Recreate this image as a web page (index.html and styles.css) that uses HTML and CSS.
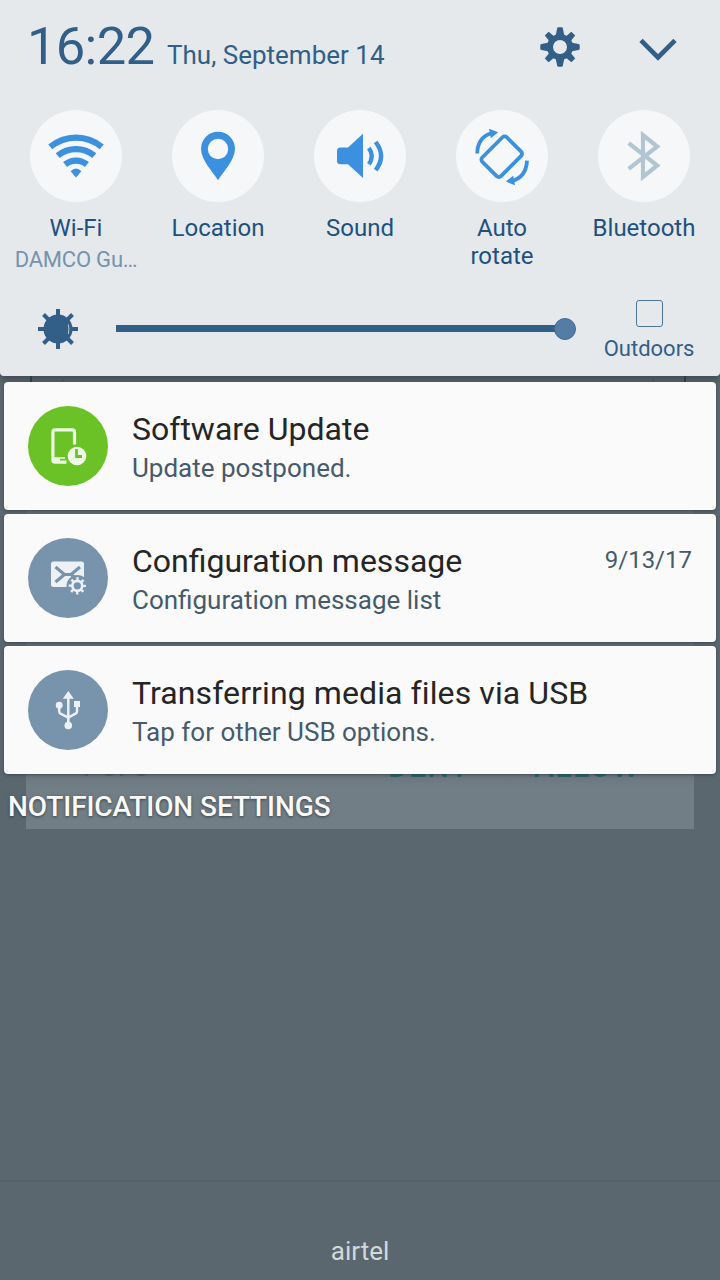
FILE: index.html
```html
<!DOCTYPE html>
<html lang="en">
<head>
<meta charset="utf-8">
<title>Notifications</title>
<link rel="stylesheet" href="styles.css">
</head>
<body>
<div class="screen">
  <div class="backdrop" aria-hidden="true">
    <i class="edge edge-a"></i><i class="edge edge-b"></i><i class="edge edge-c"></i><i class="edge edge-d"></i>
    <div class="dialog">
      <span class="count">1 of 3</span><span class="deny">DENY</span><span class="allow">ALLOW</span>
    </div>
  </div>
  <section class="panel">
    <header class="header">
      <span class="time">16:22</span>
      <span class="date">Thu, September 14</span>
      <svg class="gear" viewBox="-20 -20 40 40">
        <circle r="10" fill="none" stroke="#315f87" stroke-width="6"/>
        <g fill="#315f87">
          <path id="tooth" d="M-4.200 -12L-2.900 -18.600Q-2.700 -19.700-1.800 -19.700H1.800Q2.700 -19.700 2.900 -18.600L4.200 -12Z"/>
          <use href="#tooth" transform="rotate(90)"/><use href="#tooth" transform="rotate(180)"/><use href="#tooth" transform="rotate(270)"/>
          <path id="diag" d="M-3.400 -11.500L-2.700 -18.800H2.700L3.400 -11.500Z" transform="rotate(45)"/>
          <use href="#diag" transform="rotate(90)"/><use href="#diag" transform="rotate(180)"/><use href="#diag" transform="rotate(270)"/>
        </g>
      </svg>
      <svg class="chevron" viewBox="638 36 40 26"><path d="M641 40.400L658 57.400L675 40.400" fill="none" stroke="#315f87" stroke-width="4.700"/></svg>
    </header>
    <div class="tiles">
      <div class="tile">
        <svg class="disc" viewBox="30 110 92 92"><g fill="none" stroke="#3b90df" stroke-width="6.2"><path d="M50.3 146.9A40 40 0 0 1 101.7 146.9"/><path d="M57.7 155.7A28.5 28.5 0 0 1 94.3 155.7"/><path d="M65.1 164.5A17 17 0 0 1 86.9 164.5"/></g><path d="M76 177.4L70.6 171.2Q76 166 81.4 171.2Z" fill="#3b90df"/></svg>
        <span class="label">Wi-Fi</span><span class="network">DAMCO Gu…</span>
      </div>
      <div class="tile">
        <svg class="disc" viewBox="172 110 92 92"><path fill="#3b90df" fill-rule="evenodd" d="M218 180.200C212.500 171.500 201 160 201 148.800A17 17 0 0 1 235 148.800C235 160 223.500 171.500 218 180.200ZM218 138.800A10.200 10.200 0 1 0 218 159.200A10.200 10.200 0 1 0 218 138.800Z"/></svg>
        <span class="label">Location</span>
      </div>
      <div class="tile">
        <svg class="disc" viewBox="314 110 92 92"><path fill="#3b90df" d="M340.500 147.600H348L363 133.800V178L348 164.200H340.500Q337 164.200 337 160.700V151.200Q337 147.600 340.500 147.600Z"/><g fill="none" stroke="#3b90df" stroke-width="4.400"><path d="M368.900 147.900Q374.600 156 368.900 164.200"/><path d="M375.600 142Q386.600 156 375.600 170.200"/></g></svg>
        <span class="label">Sound</span>
      </div>
      <div class="tile">
        <svg class="disc" viewBox="456 110 92 92"><g fill="none" stroke="#3b90df" stroke-width="3.800"><rect x="-17.300" y="-13.200" width="34.600" height="26.400" rx="3" transform="translate(501.700 156.700) rotate(-45)"/><path d="M477.200 153.500C477.400 142 482 136 491.500 133.200M527 160.700C526.500 172 522 178.500 511.500 181.200"/></g><path fill="#3b90df" d="M489 128.800L498.200 132.300L490.800 138.200ZM505.800 181.500L513.200 175.800L515 185.200Z"/></svg>
        <span class="label">Auto<br>rotate</span>
      </div>
      <div class="tile">
        <svg class="disc" viewBox="598 110 92 92"><path fill="none" stroke="#b2c5d3" stroke-width="4.200" d="M628.700 143.200L657.200 165.500L643 176.800V135.200L657.200 146.500L628.700 168.800"/></svg>
        <span class="label">Bluetooth</span>
      </div>
    </div>
    <div class="brightness">
      <svg class="sun" viewBox="-20 -20 40 40"><circle r="14.500" fill="#315f87"/><path d="M0 -20V20M-20 0H20M-14.500 -14.500L14.500 14.500M14.500 -14.500L-14.500 14.500" stroke="#315f87" stroke-width="4"/><path d="M10.300 -4.500Q11.600 0 10.300 5" fill="none" stroke="#b9c9d5" stroke-width="1"/></svg>
      <div class="slider"><span class="thumb"></span></div>
      <div class="outdoors"><span class="check"></span><span>Outdoors</span></div>
    </div>
  </section>
  <main class="cards">
    <article class="card">
      <svg class="badge green" viewBox="28 406 80 80"><g fill="none" stroke="#edf9e5" stroke-width="3.200"><path d="M74.500 444.500V432Q74.500 429.800 72.300 429.800H55Q52.900 429.800 52.900 432V460Q52.900 462.200 55 462.200H66.500"/></g><path d="M52.500 457.200H65V458.800H60V461.200H52.500Z" fill="#edf9e5"/><circle cx="77" cy="456" r="9.300" fill="#edf9e5"/><path d="M76.500 449V456.500H82" fill="none" stroke="#6ac227" stroke-width="2.800"/></svg>
      <div class="copy"><h2>Software Update</h2><p>Update postponed.</p></div>
    </article>
    <article class="card">
      <svg class="badge" viewBox="28 538 80 80"><rect x="51" y="561.500" width="33" height="25.500" rx="2.500" fill="#edf1f6"/><path d="M55.500 567L64.500 574.500H71L80 567M64.500 574.500L55.500 582M71 574.500L76 578.500" fill="none" stroke="#7893ac" stroke-width="3.100"/><circle cx="77.300" cy="585.800" r="10.800" fill="#7893ac"/><g fill="none" stroke="#edf1f6"><circle cx="77.300" cy="585.800" r="5" stroke-width="2.700"/><circle cx="77.300" cy="585.800" r="7.200" stroke-width="2.800" stroke-dasharray="2.400 3.255" stroke-dashoffset="1.200"/></g></svg>
      <div class="copy"><h2>Configuration message</h2><p>Configuration message list</p></div>
      <time>9/13/17</time>
    </article>
    <article class="card">
      <svg class="badge" viewBox="28 670 80 80"><path d="M68.300 696V725M59.200 705V711.500Q59.200 713 60.500 713.700L68.300 717.500L75.500 713.700Q77 713 77 711.500V704" fill="none" stroke="#edf1f6" stroke-width="2.500"/><path d="M68.300 691L73.800 698.800H62.800ZM74 701H80V707H74Z" fill="#edf1f6"/><circle cx="59.200" cy="705.200" r="3.400" fill="#edf1f6"/><circle cx="68.300" cy="725.500" r="3.800" fill="#edf1f6"/></svg>
      <div class="copy"><h2 class="wide">Transferring media files via USB</h2><p>Tap for other USB options.</p></div>
    </article>
  </main>
  <div class="settings">NOTIFICATION SETTINGS</div>
  <footer class="carrier">airtel</footer>
</div>
</body>
</html>
```

FILE: styles.css
```css
* { box-sizing: border-box; }
body { margin: 0; font-family: Roboto, "Liberation Sans", sans-serif; }
svg { display: block; flex: none; }
.screen {
  position: relative;
  display: flex;
  flex-direction: column;
  width: 720px;
  height: 1280px;
  overflow: hidden;
  background: #5b676f;
}

/* Dimmed permission dialog under the shade */
.backdrop { position: absolute; inset: 0; }
.dialog {
  position: absolute;
  left: 26px;
  top: 386px;
  width: 668px;
  height: 443px;
  background: linear-gradient(#626d75 0 380px, #727e86 400px);
  font-size: 30px;
  line-height: 32px;
  font-weight: 500;
  letter-spacing: 1.5px;
  color: #2a6466;
}
.dialog span { position: absolute; top: 365px; }
.dialog .count { left: 52px; color: #56626a; font-weight: 400; font-size: 28px; letter-spacing: 0; }
.deny { left: 362px; }
.allow { left: 508px; }
.edge { position: absolute; top: 376px; width: 2px; height: 6px; z-index: 1; background: #263e4b; }
.edge-a { left: 30px; }
.edge-b { left: 62px; background: #48535c; }
.edge-c { left: 652px; background: #48535c; }
.edge-d { left: 684px; }

.panel {
  position: relative;
  height: 376px;
  background: #e5e9ec;
  border-radius: 0 0 4px 4px;
  color: #315f87;
  box-shadow: 0 2px 8px rgba(20, 30, 40, .5);
}
.header { display: flex; align-items: baseline; height: 110px; padding: 15px 42px 0 27px; }
.time { width: 140px; font-size: 52.5px; line-height: 62px; letter-spacing: -.7px; }
.date { flex: 1; font-size: 26px; line-height: 30px; white-space: nowrap; }
.gear { width: 40px; height: 40px; align-self: flex-start; margin: 12px 58px 0 0; }
.chevron { width: 40px; height: 26px; align-self: flex-start; margin-top: 21px; }

.tiles { display: grid; grid-template-columns: repeat(5, 142px); height: 172px; padding-left: 5px; }
.tile { display: flex; flex-direction: column; align-items: center; text-align: center; }
.disc { width: 92px; height: 92px; margin-bottom: 12px; border-radius: 50%; background: #f5f7f9; }
.label { font-size: 24px; line-height: 28px; color: #1f5180; }
.network { margin-top: 5px; font-size: 22px; line-height: 26px; letter-spacing: -.2px; color: #7593ae; white-space: nowrap; }

.brightness { display: flex; align-items: center; height: 94px; padding: 0 25px 0 38px; }
.sun { width: 40px; height: 40px; }
.slider { position: relative; width: 450px; height: 7px; margin: 0 38px; margin-bottom: 1px; background: #315f87; }
.thumb {
  position: absolute;
  right: -11px;
  top: -7px;
  width: 22px;
  height: 22px;
  border: 1px solid #41698f;
  border-radius: 50%;
  background: #537da5;
}
.outdoors {
  display: flex;
  flex-direction: column;
  align-items: center;
  align-self: flex-start;
  gap: 9px;
  width: 92px;
  margin-top: 18px;
  font-size: 22px;
  line-height: 26px;
}
.check { width: 27px; height: 27px; border: 1.5px solid #4d7599; border-radius: 3px; }

.cards { position: relative; display: flex; flex-direction: column; gap: 4px; padding: 6px 4px 0; }
.card {
  display: flex;
  height: 128px;
  padding: 24px 24px 0;
  border-radius: 4px;
  background: #fafafa;
  box-shadow: 0 1px 3px rgba(20, 30, 40, .45);
}
.badge { width: 80px; height: 80px; margin-right: 24px; border-radius: 50%; background: #7893ac; }
.badge.green { background: #6ac227; }
.copy { flex: 1; padding-top: 4px; white-space: nowrap; }
h2 { margin: 0; font-size: 32px; line-height: 38px; font-weight: 400; color: #252525; }
h2.wide { letter-spacing: .1px; }
.copy p { margin: 5px 0 0; font-size: 26px; line-height: 30px; color: #465a6b; }
time { padding-top: 8px; font-size: 24px; line-height: 28px; color: #465a6b; }

.settings {
  position: relative;
  padding: 17px 8px;
  font-size: 28px;
  line-height: 32px;
  letter-spacing: -.08px;
  font-weight: 500;
  color: #fafafa;
  text-shadow: 0 1px 3px rgba(0, 0, 0, .5);
}
.carrier {
  position: relative;
  height: 100px;
  margin-top: auto;
  padding-top: 54px;
  border-top: 2px solid #55616a;
  text-align: center;
  font-size: 26px;
  line-height: 30px;
  color: #d3d8db;
}
```
